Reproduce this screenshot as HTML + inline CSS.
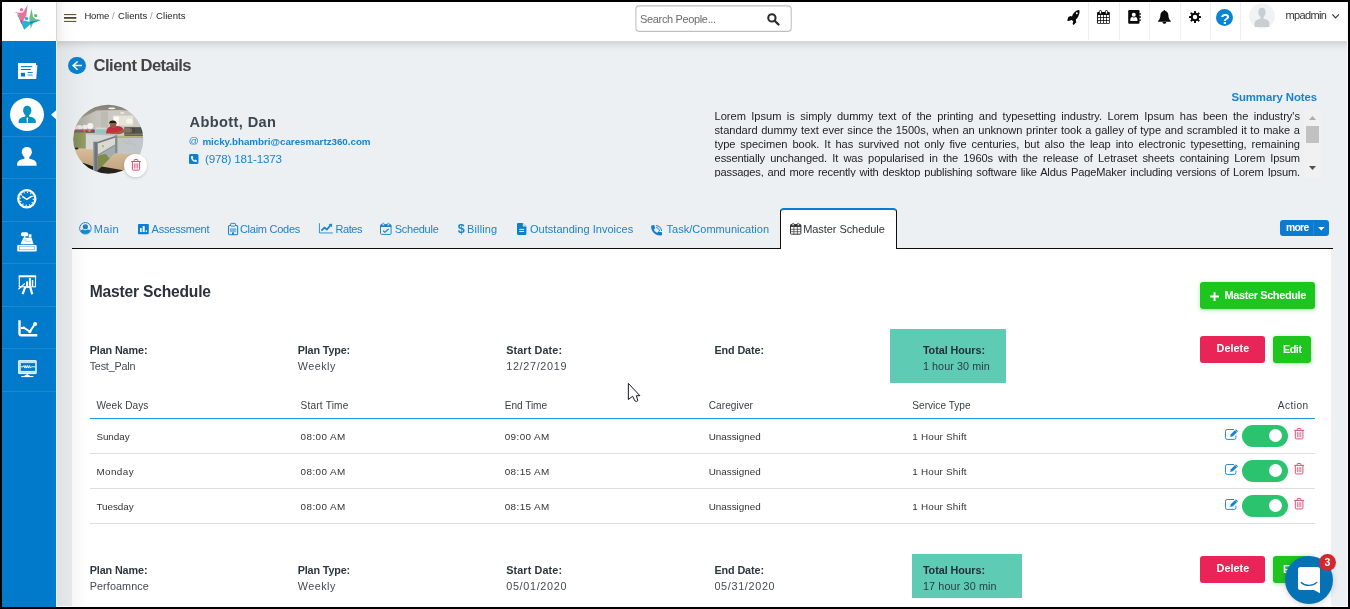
<!DOCTYPE html>
<html lang="en"><head><meta charset="utf-8"><title>Client Details</title>
<style>
html,body{margin:0;padding:0;background:#000;}
body{width:1350px;height:609px;overflow:hidden;font-family:"Liberation Sans",sans-serif;}
#app{position:absolute;left:0;top:0;width:1350px;height:609px;overflow:hidden;background:#000;}
#page{position:absolute;left:2px;top:2px;width:1346px;height:605px;background:#ecf0f3;overflow:hidden;}
.abs{position:absolute;}
.t{position:absolute;white-space:nowrap;line-height:16px;height:16px;}
svg{position:absolute;overflow:visible;}
#side{position:absolute;left:2px;top:41px;width:54px;height:566px;background:#027acc;}
#side .sep{position:absolute;left:0;width:54px;height:1px;background:rgba(255,255,255,.11);}
#logo{position:absolute;left:2px;top:2px;width:54px;height:39px;background:#fff;}
#head{position:absolute;left:56px;top:2px;width:1292px;height:39px;background:#fff;}
#headgrad{position:absolute;left:56px;top:2px;width:22px;height:39px;background:linear-gradient(90deg,rgba(0,0,0,.07),rgba(0,0,0,.02) 40%,rgba(0,0,0,0));}
#headline{position:absolute;left:56px;top:2px;width:1px;height:39px;background:#cfd6de;}
#headshadow{position:absolute;left:56px;top:41px;width:1292px;height:11px;background:linear-gradient(180deg,rgba(0,0,0,.09),rgba(0,0,0,.105) 12%,rgba(0,0,0,.055) 38%,rgba(0,0,0,.02) 68%,rgba(0,0,0,0));}
#leftshadow{position:absolute;left:56px;top:41px;width:38px;height:566px;background:linear-gradient(90deg,rgba(0,0,0,.062),rgba(0,0,0,.035) 35%,rgba(0,0,0,.012) 70%,rgba(0,0,0,0));}
#leftline{position:absolute;left:56px;top:41px;width:1px;height:566px;background:#efebe7;}
.hsep{position:absolute;top:2px;width:1px;height:37.5px;background:#eeeeee;}
#search{position:absolute;left:635.5px;top:5.5px;width:154px;height:24px;border:1px solid #bdbdbd;border-radius:3px;background:#fff;}
#card{position:absolute;left:72px;top:248.5px;width:1259.4px;height:358.5px;background:#fff;}
#cardgrad{position:absolute;left:72px;top:248.5px;width:16px;height:358.5px;background:linear-gradient(90deg,rgba(0,0,0,.03),rgba(0,0,0,0));}
#tabline{position:absolute;left:72px;top:247.5px;width:1261px;height:1.15px;background:#0c0c0c;}
#acttab{position:absolute;left:780px;top:208px;width:115px;height:38.7px;background:#fff;border:1px solid #111;border-top:2.2px solid #0b7ad1;border-bottom:none;border-radius:4px 4px 0 0;}
.btn{position:absolute;border-radius:3px;}
.teal{position:absolute;background:#5ecbb5;}
.rowline{position:absolute;left:89.7px;width:1225.3px;height:1px;background:#dedede;}
.toggle{position:absolute;width:46.2px;height:22px;border-radius:11px;background:#2bc36e;}
.toggle i{position:absolute;left:26.8px;top:4.2px;width:13.2px;height:13.2px;border-radius:50%;background:#fff;}
.nl{position:absolute;left:0;width:100%;height:16px;line-height:16px;white-space:nowrap;text-align:justify;text-align-last:justify;color:#1d1d1d;}
#txt{position:absolute;left:0;top:0;width:1350px;height:609px;will-change:transform;}
#txt2{position:absolute;left:0;top:0;width:1350px;height:609px;will-change:transform;z-index:8;}

</style></head>
<body>
<div id="app">
<div id="page"></div>
<div id="head"></div>
<div id="headgrad"></div>
<div id="headshadow"></div>
<div id="leftshadow"></div>
<div id="leftline"></div>
<div id="headline"></div>
<div id="logo"></div>
<div id="side">
  <div class="sep" style="top:51.93px"></div>
  <div class="sep" style="top:94.51px"></div>
  <div class="sep" style="top:137.09px"></div>
  <div class="sep" style="top:179.67px"></div>
  <div class="sep" style="top:222.25px"></div>
  <div class="sep" style="top:264.83px"></div>
  <div class="sep" style="top:307.41px"></div>
  <div class="sep" style="top:349.99px"></div>
</div>
<!-- active sidebar circle and pointer -->
<div class="abs" style="left:10px;top:98px;width:34px;height:33px;border-radius:50%;background:#fff"></div>
<svg style="left:50.6px;top:109.8px" width="5.4" height="9.4" viewBox="0 0 5.4 9.4"><polygon points="5.4,0 5.4,9.4 0,4.7" fill="#fafbfc"/></svg>

<!-- header widgets -->
<svg style="left:64.4px;top:14px" width="12.3" height="8" viewBox="0 0 12.3 8"><g fill="#4d4a22"><rect x="0" y="0.1" width="12.3" height="1"/><rect x="0" y="3" width="12.3" height="1.8"/><rect x="0" y="6.9" width="12.3" height="1"/></g></svg>
<svg style="left:0;top:0" width="800" height="40" viewBox="0 0 800 40"><rect x="635.9" y="5.85" width="155.3" height="25.5" rx="3" fill="#fff" stroke="#bfbfbf" stroke-width="1.05"/></svg>
<div class="hsep" style="left:1088px"></div>
<div class="hsep" style="left:1118.5px"></div>
<div class="hsep" style="left:1149px"></div>
<div class="hsep" style="left:1180px"></div>
<div class="hsep" style="left:1210px"></div>
<div class="hsep" style="left:1239.5px"></div>

<!-- tabs -->
<div id="tabline"></div>
<div id="acttab"></div>
<div id="card"></div>
<div id="cardgrad"></div>

<!-- more button -->
<div class="btn" style="left:1280px;top:219.7px;width:49px;height:16.4px;background:#0b7ad1"></div>
<div class="abs" style="left:1312.6px;top:221.5px;width:1px;height:13px;background:rgba(255,255,255,.12)"></div>
<svg style="left:1318px;top:227.2px" width="6.6" height="3.4" viewBox="0 0 6.6 3.4"><polygon points="0,0 6.6,0 3.3,3.4" fill="#fff"/></svg>

<!-- add master schedule button -->
<div class="btn" style="left:1200.2px;top:281.8px;width:115px;height:27.2px;background:#1ec51f;box-shadow:0 1px 5px rgba(30,190,60,.32)"></div>
<svg style="left:1210px;top:291.6px" width="9" height="9" viewBox="0 0 9 9"><path d="M4.55 0.2V8.9M0.2 4.55H8.9" stroke="#fff" stroke-width="1.95" fill="none"/></svg>

<!-- plan 1 -->
<div class="teal" style="left:890.2px;top:328.7px;width:115.5px;height:53.9px"></div>
<div class="btn" style="left:1200.3px;top:336px;width:64.7px;height:26.7px;background:#e92558"></div>
<div class="btn" style="left:1272.9px;top:336px;width:38px;height:26.7px;background:#1ec51f;box-shadow:0 1px 5px rgba(30,190,60,.35)"></div>
<div class="abs" style="left:90px;top:417.7px;width:1225px;height:1.4px;background:#1f9ce6"></div>
<div class="rowline" style="top:453px"></div>
<div class="rowline" style="top:488px"></div>
<div class="rowline" style="top:523px"></div>
<div class="toggle" style="left:1241.85px;top:424.8px"><i></i></div>
<div class="toggle" style="left:1241.85px;top:459.8px"><i></i></div>
<div class="toggle" style="left:1241.85px;top:494.8px"><i></i></div>

<!-- plan 2 -->
<div class="teal" style="left:911.8px;top:554.2px;width:109.8px;height:43.8px"></div>
<div class="btn" style="left:1200.3px;top:556px;width:64.7px;height:26.7px;background:#e92558"></div>
<div class="btn" style="left:1272.9px;top:556px;width:38px;height:26.7px;background:#1ec51f;box-shadow:0 1px 5px rgba(30,190,60,.35)"></div>

<!-- bottom / right thin white lines -->
<div class="abs" style="left:56px;top:606px;width:1292px;height:1px;background:#fafafa"></div>
<div class="abs" style="left:1347px;top:2px;width:1px;height:605px;background:#f6f7f9"></div>

<!-- ===== logo ===== -->
<svg style="left:0;top:0" width="60" height="41" viewBox="0 0 60 41">
  <path d="M16.9 14 L18.6 15 L21.8 21.2 L24.6 20.6 L29 21.8 L41 19.9 L30.5 24.2 L24.2 29.7 L21 22.8 Z" fill="#2cb0d8"/>
  <circle cx="26.5" cy="18.5" r="1.65" fill="#2cb0d8"/>
  <path d="M31.5 8.8 L33 16.8 L36 19.3 L41 20 L33.4 22.2 L30.7 28.8 L29.3 18 Z" fill="#5bb980" fill-opacity=".92"/>
  <circle cx="35.7" cy="15.7" r="1.6" fill="#5bb980"/>
  <path d="M29.4 21.7 L41 19.9 L33.4 22.3 L30.4 24.2 L29.7 21.9Z" fill="#0b8fc0"/>
  <path d="M14.4 11.9 L19.6 12.8 L23 12.5 L27.6 5.1 L26.3 15.5 L21.4 24.1 L18.5 14.4 L17.6 13.4 Z" fill="#e8729b"/>
  <circle cx="21.45" cy="9.8" r="1.7" fill="#e8729b"/>
  <path d="M20.3 21.2 L22.6 19.5 L21.5 24.1Z" fill="#c2457e"/>
</svg>

<!-- ===== sidebar icons ===== -->
<!-- newspaper -->
<svg style="left:18px;top:63px" width="20" height="16" viewBox="0 0 20 16">
  <path d="M0 0.1H18V2L19.4 2.2L18.2 16H0Z" fill="#fff"/>
  <g fill="#027acc"><rect x="2.9" y="3.1" width="11.3" height="1.05"/><rect x="2.9" y="6" width="10" height="1.05"/><rect x="2.9" y="9.8" width="4.2" height="3.7"/><rect x="9.6" y="9.1" width="5.1" height="0.95"/><rect x="9.6" y="11.2" width="5.1" height="2" fill-opacity=".45"/></g>
</svg>
<!-- user-tie (active) -->
<svg style="left:18px;top:105px" width="18" height="19" viewBox="0 0 18 19">
  <path d="M9.2 0.8c2.6 0 4.1 1.6 4 4.3 0.5 0.3 0.4 1.5-0.2 1.8-0.3 1.6-1.1 2.7-1.9 3.3v1.3c2.8 0.5 6.3 1.6 6.7 4.4v2.1H0.7v-2.1c0.4-2.8 3.9-3.9 6.7-4.4v-1.3c-0.8-0.6-1.6-1.7-1.9-3.3-0.6-0.3-0.7-1.5-0.2-1.8-0.1-2.7 1.3-4.3 3.9-4.3z" fill="#0692bd"/>
  <path d="M9.3 12l0.75 1.6-0.35 4.2-0.4 1-0.4-1-0.35-4.2z" fill="#fff"/>
</svg>
<!-- user -->
<svg style="left:17px;top:146px" width="20" height="20" viewBox="0 0 20 20">
  <path d="M10 0.9c2.9 0 4.8 1.5 4.7 4.6 0.6 0.4 0.4 1.9-0.3 2.2-0.4 1.7-1.2 2.7-2.1 3.4v1.6c3 0.6 6.7 1.5 7.2 4.6v2.5H0.2v-2.5c0.5-3.1 4.2-4 7.2-4.6v-1.6c-0.9-0.7-1.7-1.7-2.1-3.4-0.7-0.3-0.9-1.8-0.3-2.2-0.1-3.1 2.1-4.6 5-4.6z" fill="#fff"/>
</svg>
<!-- clock -->
<svg style="left:16.8px;top:189.4px" width="19.6" height="19.6" viewBox="0 0 19.6 19.6">
  <circle cx="9.8" cy="9.8" r="8.6" fill="none" stroke="#fff" stroke-width="2.3"/>
  <circle cx="9.8" cy="9.8" r="6.6" fill="none" stroke="#fff" stroke-width="1.4" stroke-dasharray="1.1 2.355"/>
  <path d="M5.2 7.4L9.8 10.4L14.8 7.2" fill="none" stroke="#fff" stroke-width="1.5"/>
</svg>
<!-- cash register -->
<svg style="left:17px;top:231.6px" width="20" height="20" viewBox="0 0 20 20">
  <rect x="4" y="0.3" width="7.2" height="4" rx="1.6" fill="#fff"/>
  <rect x="11.7" y="2.3" width="2.8" height="3.2" rx=".4" fill="#fff"/>
  <rect x="7.2" y="4" width="1.2" height="2" fill="#fff"/>
  <path d="M6.3 5.7H14.5L16.6 12.3H3.4Z" fill="#fff"/>
  <rect x="6.6" y="7.6" width="3" height=".8" fill="#027acc" fill-opacity=".55"/><rect x="8.6" y="9.3" width="5" height=".8" fill="#027acc" fill-opacity=".4"/>
  <rect x="0.2" y="12.9" width="19.5" height="6.5" rx="1.2" fill="#fff"/>
  <rect x="2.6" y="14.7" width="14.8" height="3" fill="none" stroke="#027acc" stroke-opacity=".55" stroke-width=".7"/>
</svg>
<!-- presentation -->
<svg style="left:18px;top:274.6px" width="19" height="20" viewBox="0 0 19 20">
  <rect x="1.3" y="1.2" width="16.2" height="10.6" fill="none" stroke="#fff" stroke-width="1.1"/>
  <rect x="0.7" y="0.4" width="17.4" height="1.9" fill="#fff"/>
  <rect x="8" y="6.4" width="2.1" height="5" fill="#fff"/><rect x="10.9" y="3.2" width="2.1" height="8.2" fill="#fff"/><rect x="13.8" y="5.1" width="1.5" height="6.3" fill="#fff"/>
  <path d="M7.3 11.9L4.6 19.2M12.2 11.9L14.2 19.2" stroke="#fff" stroke-width="2.2" fill="none"/>
  <rect x="6.8" y="11.5" width="6" height="1.3" fill="#fff"/>
  <path d="M0.4 14.3L6.8 8.5" stroke="#fff" stroke-width="1.2" fill="none"/>
</svg>
<!-- line chart -->
<svg style="left:17.6px;top:320px" width="20" height="17" viewBox="0 0 20 17">
  <path d="M1.5 0.2V13.6Q1.5 15.2 3.2 15.2H19.3" fill="none" stroke="#fff" stroke-width="2.4"/>
  <path d="M3 8L5.9 7.8L11.8 11.6L17.1 3.9" fill="none" stroke="#fff" stroke-width="1.9"/>
  <circle cx="5.9" cy="7.8" r="1.3" fill="#fff"/><circle cx="11.8" cy="11.6" r="1.7" fill="#fff"/><circle cx="17.1" cy="3.9" r="2" fill="#fff"/>
</svg>
<!-- monitor -->
<svg style="left:17.8px;top:360px" width="19" height="18" viewBox="0 0 19 18">
  <rect x="0.2" y="0.2" width="18.4" height="13.8" rx=".8" fill="#c4e0f5"/>
  <rect x="0.6" y="0.6" width="17.6" height="13" rx=".5" fill="none" stroke="#fff" stroke-width=".7"/>
  <rect x="2.9" y="3.1" width="14.2" height="7.8" fill="#027acc"/>
  <path d="M2.9 6.8H5.2L6 5.5L6.9 8.1L7.8 5.5L8.7 8.1L9.6 5.5L10.5 8.1L11.4 5.5L12.3 8.1L13.1 6.8H17.1" fill="none" stroke="#fff" stroke-width=".9"/>
  <rect x="0.6" y="11.6" width="17.6" height=".5" fill="#fff" fill-opacity=".7"/>
  <path d="M9.2 14L12.8 16.2H5.6Z" fill="#fff"/>
  <rect x="3.2" y="16" width="12.2" height="1.1" fill="#fff"/>
</svg>

<!-- ===== header icons ===== -->
<!-- search -->
<svg style="left:766.6px;top:12.5px" width="13" height="13" viewBox="0 0 13 13">
  <circle cx="4.9" cy="4.9" r="3.65" fill="none" stroke="#2b2b2b" stroke-width="2.05"/>
  <path d="M7.7 7.7L11.5 11.5" stroke="#2b2b2b" stroke-width="2.3" stroke-linecap="round"/>
</svg>
<!-- rocket -->
<svg style="left:1066.7px;top:9.9px" width="13" height="15.2" viewBox="0 0 13 15.2">
  <path d="M12.2 0.1C12.7 1.3 12.6 2.6 12.3 3.6C11.9 5 11.5 6 11 7C10.3 8.2 9.6 8.9 8.8 9.5L9.3 12.3L6.7 14.9L5.6 14.1L6.2 11.2L4.7 10.1L1.4 10.9L0.2 10.8L1.3 7L3.6 6.1L5 6.4C5.4 5.2 6 4 6.8 3C7.4 2.2 8.1 1.5 8.9 1C10 0.4 11.1 0.1 12.2 0.1Z" fill="#0b0b0b"/>
  <circle cx="9.8" cy="3.3" r="0.95" fill="#fff"/>
</svg>
<!-- calendar -->
<svg style="left:1097px;top:10px" width="13" height="14" viewBox="0 0 13 14">
  <rect x="0.1" y="2" width="12.7" height="11.8" rx=".8" fill="#0b0b0b"/>
  <rect x="2.3" y="0.45" width="2.3" height="3.6" rx="1.15" fill="#fff" stroke="#0b0b0b" stroke-width=".95"/>
  <rect x="8.3" y="0.45" width="2.3" height="3.6" rx="1.15" fill="#fff" stroke="#0b0b0b" stroke-width=".95"/>
  <g fill="#fff">
    <rect x="1" y="5.1" width="2.2" height="2.05" rx=".3"/><rect x="3.95" y="5.1" width="2.2" height="2.05" rx=".3"/><rect x="6.9" y="5.1" width="2.2" height="2.05" rx=".3"/><rect x="9.85" y="5.1" width="2.2" height="2.05" rx=".3"/>
    <rect x="1" y="8.1" width="2.2" height="2.05" rx=".3"/><rect x="3.95" y="8.1" width="2.2" height="2.05" rx=".3"/><rect x="6.9" y="8.1" width="2.2" height="2.05" rx=".3"/><rect x="9.85" y="8.1" width="2.2" height="2.05" rx=".3"/>
    <rect x="1" y="11.1" width="2.2" height="1.9" rx=".3"/><rect x="3.95" y="11.1" width="2.2" height="1.9" rx=".3"/><rect x="6.9" y="11.1" width="2.2" height="1.9" rx=".3"/><rect x="9.85" y="11.1" width="2.2" height="1.9" rx=".3"/>
  </g>
</svg>
<!-- address book -->
<svg style="left:1127.6px;top:10px" width="14" height="14" viewBox="0 0 14 14">
  <rect x="0.2" y="0.1" width="11.3" height="13.7" rx="1.1" fill="#0b0b0b"/>
  <circle cx="12" cy="3.9" r=".95" fill="#0b0b0b"/><circle cx="12" cy="7" r=".95" fill="#0b0b0b"/><circle cx="12" cy="10.1" r=".95" fill="#0b0b0b"/>
  <circle cx="5.8" cy="4.7" r="1.95" fill="#fff"/>
  <path d="M2.3 11.1V9.2Q2.3 7.1 4.4 7.1L5.8 7.7L7.2 7.1Q9.4 7.1 9.4 9.2V11.1Z" fill="#fff"/>
</svg>
<!-- bell -->
<svg style="left:1158.3px;top:10px" width="13" height="14" viewBox="0 0 13 14">
  <path d="M6.4 0C7 0 7.3 0.4 7.3 0.9C9.3 1.4 10.3 3 10.4 5.2C10.5 7.6 10.9 9.2 12.8 10.9V11.7H0V10.9C1.9 9.2 2.3 7.6 2.4 5.2C2.5 3 3.5 1.4 5.5 0.9C5.5 0.4 5.8 0 6.4 0Z" fill="#0b0b0b"/>
  <path d="M4.5 11.9H8.3C8.3 13 7.5 13.8 6.4 13.8C5.3 13.8 4.5 13 4.5 11.9Z" fill="#0b0b0b"/>
</svg>
<!-- gear -->
<svg style="left:1189.2px;top:11px" width="12" height="12" viewBox="-6 -6 12 12">
  <g fill="#0b0b0b">
    <circle r="4.35"/>
    <rect x="-1" y="-6" width="2" height="12" rx=".5"/>
    <rect x="-1" y="-6" width="2" height="12" rx=".5" transform="rotate(45)"/>
    <rect x="-1" y="-6" width="2" height="12" rx=".5" transform="rotate(90)"/>
    <rect x="-1" y="-6" width="2" height="12" rx=".5" transform="rotate(135)"/>
  </g>
  <circle r="2.25" fill="#fff"/>
</svg>
<!-- help -->
<div class="abs" style="left:1216px;top:9px;width:17.2px;height:17.2px;border-radius:50%;background:#0884d2"></div>
<!-- avatar -->
<svg style="left:1249px;top:3.4px" width="26" height="26" viewBox="0 0 26 26">
  <defs><clipPath id="avc"><circle cx="13" cy="13" r="12.8"/></clipPath></defs>
  <circle cx="13" cy="13" r="12.8" fill="#f1f2f3"/>
  <g clip-path="url(#avc)">
  <path d="M13 4.8c2.3 0 3.6 1.5 3.5 4.2 0.5 0.3 0.4 1.5-0.2 1.8-0.3 1.6-1 2.7-1.7 3.3v1.6c2.4 0.6 5.4 1.5 5.8 4.3v4H5.6v-4c0.4-2.8 3.4-3.7 5.8-4.3v-1.6c-0.7-0.6-1.4-1.7-1.7-3.3-0.6-0.3-0.7-1.5-0.2-1.8-0.1-2.7 1.2-4.2 3.5-4.2z" fill="#c9ced1"/>
  </g>
</svg>
<!-- chevron -->
<svg style="left:1332.4px;top:14.4px" width="7.2" height="4.8" viewBox="0 0 7.2 4.8"><path d="M0.3 0.4L3.6 4L6.9 0.4" fill="none" stroke="#333" stroke-width="1.1"/></svg>

<!-- back button -->
<div class="abs" style="left:68.2px;top:56.8px;width:17.6px;height:17.2px;border-radius:50%;background:#0680cf"></div>
<svg style="left:72px;top:61px" width="10.5" height="9.4" viewBox="0 0 10.5 9.4"><path d="M9.9 4.6H0.9M5.6 0.5L1 4.6L5.6 8.7" fill="none" stroke="#fff" stroke-width="1.45"/></svg>

<!-- ===== profile photo ===== -->
<svg style="left:72.6px;top:104.4px" width="70.4" height="70" viewBox="72.6 104.4 70.4 70">
  <defs>
    <clipPath id="pc"><ellipse cx="107.85" cy="139.6" rx="35.05" ry="34.55"/></clipPath>
    <filter id="bl" x="-5%" y="-5%" width="110%" height="110%"><feGaussianBlur stdDeviation="0.75"/></filter>
    <linearGradient id="wallg" x1="0" y1="0" x2="1" y2="0"><stop offset="0" stop-color="#a19d93"/><stop offset=".3" stop-color="#c3c1b8"/><stop offset=".55" stop-color="#cccbc3"/><stop offset="1" stop-color="#c4c1b6"/></linearGradient>
    <linearGradient id="ceilg" x1="0" y1="0" x2="0" y2="1"><stop offset="0" stop-color="#7d766b"/><stop offset="1" stop-color="#a5a197"/></linearGradient>
    <linearGradient id="deskl" x1="0" y1="0" x2="0" y2="1"><stop offset="0" stop-color="#d8bf9c"/><stop offset="1" stop-color="#c2a07a"/></linearGradient>
    <linearGradient id="deskr" x1="0" y1="0" x2="0" y2="1"><stop offset="0" stop-color="#d3b996"/><stop offset="1" stop-color="#bd9e7b"/></linearGradient>
    <linearGradient id="grn" x1="0" y1="0" x2="1" y2="0"><stop offset="0" stop-color="#7a8350"/><stop offset="1" stop-color="#949c68"/></linearGradient>
  </defs>
  <g clip-path="url(#pc)"><g filter="url(#bl)">
    <rect x="70" y="100" width="76" height="80" fill="url(#wallg)"/>
    <!-- ceiling -->
    <path d="M70 100H146V113L120 110.5L96 110.8L70 124Z" fill="url(#ceilg)"/>
    <ellipse cx="111.4" cy="108.7" rx="3.6" ry="0.9" fill="#fbfbf6"/><ellipse cx="121.9" cy="113.4" rx="2.3" ry=".7" fill="#f4f4ee"/>
    <!-- column -->
    <rect x="100.5" y="112" width="7" height="18" fill="#bdbbb2"/>
    <!-- window -->
    <rect x="112.7" y="116" width="20.5" height="10" fill="#e6e3d8"/>
    <rect x="113.2" y="117" width="5.4" height="9" fill="#fbfaf4"/>
    <ellipse cx="129" cy="121.5" rx="3.4" ry="2.6" fill="#f7f5ec"/>
    <rect x="133" y="117" width="12" height="10" fill="#cfccc1"/>
    <!-- dark shelf right -->
    <rect x="124" y="127.6" width="21" height="8.6" fill="#4b4a45"/>
    <rect x="124.5" y="128.2" width="5.5" height="5" fill="#77766f"/>
    <rect x="130" y="129.2" width="1.4" height="3.6" fill="#c4662f"/>
    <rect x="134.5" y="128.6" width="6.5" height="6" fill="#4d544f"/>
    <rect x="124" y="134" width="21" height="1.3" fill="#8a7f63"/>
    <!-- teal back panel -->
    <rect x="95.3" y="128" width="10.6" height="2" fill="#d9d9d4"/>
    <rect x="95.3" y="129.7" width="10.6" height="4.4" fill="#93c6c1"/>
    <!-- balloons + strip -->
    <ellipse cx="79" cy="127.6" rx="3.2" ry="2.2" fill="#e5dfdd"/><ellipse cx="84.6" cy="127.4" rx="2.6" ry="2.3" fill="#ecebea"/><ellipse cx="89.8" cy="126.3" rx="3.1" ry="3" fill="#f3f3f2"/><ellipse cx="75.8" cy="128.4" rx="2" ry="1.6" fill="#d9cfcf"/>
    <rect x="73" y="130" width="21.5" height="2.4" fill="#a8466f"/>
    <rect x="77" y="130.2" width="2" height="2" fill="#3f8a57"/><rect x="83" y="130.2" width="2" height="2" fill="#d07c3a"/><rect x="88" y="130.2" width="2" height="2" fill="#d8a23c"/><rect x="91.5" y="130" width="2" height="2.2" fill="#5b4fa0"/>
    <rect x="73" y="132.2" width="21.5" height="1" fill="#50603f"/>
    <!-- person -->
    <path d="M108.7 124.4C108.6 121.8 110.2 120.8 112.6 120.9C115 121 116.4 122.3 116.3 124.6L115.6 124.2L109.6 123.6Z" fill="#1f1a19"/>
    <path d="M109.6 123.4H115.8V126.2C115.4 127.6 114 128 112.8 128C111.2 128 109.9 127.2 109.6 126Z" fill="#8e5d4a"/>
    <path d="M105.6 133.8C106 129.4 108 126.9 111 126.6L113 128L116.4 126.4C120 126.4 122.6 127.8 123.3 130.2L121 133.9H106Z" fill="#c72f3c"/>
    <path d="M117 132.6L122.6 129.8C124 130.2 124.7 131.2 124.6 132.6L118.6 134.6L110 134.3L109.6 133.2Z" fill="#9a6149"/>
    <!-- left green partition -->
    <rect x="70" y="132.9" width="15.6" height="15.8" fill="url(#grn)"/>
    <!-- cubicle white panels -->
    <path d="M85.4 133.6L116 135.2V150.5H85.4Z" fill="#d4d7d5"/>
    <path d="M85.4 133.4L116 135V136.2L85.4 134.7Z" fill="#babdbd"/>
    <path d="M117 136.8H145V154H117Z" fill="#c1c6c8"/>
    <path d="M117 136.6H145V138.4H117Z" fill="#b3b067"/>
    <path d="M122 141L130 145M127 140L136 147" stroke="#aeb3b6" stroke-width=".5" fill="none"/>
    <!-- glass divider -->
    <path d="M97.3 142.6L115.3 136.7V145.2L97.3 155.7Z" fill="#d9dad4"/>
    <path d="M97.3 155.7L115.3 145.2V153.7L109.4 159L105.5 154.4L97.3 157Z" fill="#a6abad"/>
    <path d="M97.3 142.2L115.3 136.2V137.8L97.3 144Z" fill="#777c80"/>
    <path d="M97.3 154.9L115.3 144.5V145.6L97.3 156.2Z" fill="#8c9194"/>
    <ellipse cx="102.6" cy="146.6" rx="1" ry="1.1" fill="#c9a95e"/>
    <rect x="114.7" y="135.6" width="2.3" height="18.2" fill="#858a8d"/>
    <!-- desks -->
    <path d="M70 148.4L93 149.8V166L70 168Z" fill="url(#deskl)"/>
    <path d="M109.4 158.8L116 153.9L146 155.5V176H100L101.5 167Z" fill="url(#deskr)"/>
    <!-- lower green panel -->
    <path d="M97.3 156.6C100.5 155 103.6 154 105.5 154.4L109.4 158.8L101.5 167L97.3 170.4Z" fill="#7f8b4b"/>
    <!-- dark floor -->
    <path d="M70 158L80.5 162.3L93 167V180H70Z" fill="#1f1b18"/>
    <path d="M97.3 170.4L101.5 167L124 170.8L146 168V180H92V171Z" fill="#28221e"/>
    <!-- post -->
    <rect x="92.7" y="142.2" width="4.6" height="30" fill="#70757a"/>
    <rect x="92.7" y="142.2" width="1.2" height="30" fill="#9ea3a6"/>
    <ellipse cx="76.2" cy="148.9" rx="1.9" ry="0.9" fill="#262626"/>
  </g></g>
</svg>
<!-- trash badge -->
<div class="abs" style="left:124.3px;top:154.2px;width:22.8px;height:22.8px;border-radius:50%;background:#fff;box-shadow:0 1px 3px rgba(0,0,0,.18)"></div>
<svg style="left:131.2px;top:158.7px" width="10" height="11.6" viewBox="0 0 10 11.6">
  <g fill="none" stroke="#e0416d" stroke-width=".95">
    <path d="M0.2 2.5H9.8"/><path d="M3.2 2.3V1.2Q3.2 0.5 3.9 0.5H6.1Q6.8 0.5 6.8 1.2V2.3"/>
    <path d="M1.4 2.7V10Q1.4 11.1 2.5 11.1H7.5Q8.6 11.1 8.6 10V2.7"/>
    <path d="M3.4 4.3V9.5M5 4.3V9.5M6.6 4.3V9.5" stroke-width=".75"/>
  </g>
</svg>
<!-- phone square -->
<svg style="left:189px;top:154px" width="9.6" height="10" viewBox="0 0 9.6 10">
  <rect x="0" y="0" width="9.5" height="10" rx="1.5" fill="#0c7fd0"/>
  <path d="M2.5 2.2L3.6 1.9L4.3 3.6L3.6 4.2C4 5.2 4.7 5.9 5.7 6.4L6.4 5.6L8 6.4L7.7 7.6C7.5 8 7.2 8.1 6.8 8.1C4.1 7.8 2.1 5.8 1.9 3.1C1.9 2.7 2.1 2.4 2.5 2.2Z" fill="#fff"/>
</svg>

<!-- ===== notes scrollbar ===== -->
<div class="abs" style="left:1304.3px;top:109px;width:16.4px;height:68px;background:#f1f1f1"></div>
<div class="abs" style="left:1306.2px;top:126px;width:12.6px;height:16.8px;background:#c1c1c1"></div>
<svg style="left:1309px;top:115.8px" width="7" height="4" viewBox="0 0 7 4"><polygon points="0,4 7,4 3.5,0" fill="#adadad"/></svg>
<svg style="left:1309px;top:166px" width="7" height="4" viewBox="0 0 7 4"><polygon points="0,0 7,0 3.5,4" fill="#505050"/></svg>

<!-- ===== tab icons ===== -->
<!-- user-circle -->
<svg style="left:79px;top:222.2px" width="12.8" height="12.6" viewBox="0 0 12.8 12.6">
  <defs><clipPath id="uc"><circle cx="6.4" cy="6.3" r="5.5"/></clipPath></defs>
  <circle cx="6.4" cy="6.3" r="5.75" fill="none" stroke="#1883cf" stroke-width="1"/>
  <circle cx="6.4" cy="4.75" r="2.6" fill="#1883cf"/>
  <path d="M1 12.4V10.2Q1.2 7.6 4.2 7.5L6.4 8.5L8.6 7.5Q11.6 7.6 11.8 10.2V12.4Z" fill="#1883cf" clip-path="url(#uc)"/>
</svg>
<!-- assessment -->
<svg style="left:138px;top:223.9px" width="10.8" height="10.2" viewBox="0 0 10.8 10.2">
  <rect width="10.8" height="10.2" rx=".8" fill="#0c7fd0"/>
  <rect x="2" y="4.1" width="1.7" height="4" fill="#fff"/><rect x="4.7" y="2.1" width="2" height="6" fill="#fff"/><rect x="7.7" y="6.4" width="1.4" height="1.7" fill="#fff"/>
</svg>
<!-- claim codes (clipboard) -->
<svg style="left:227.8px;top:222.8px" width="10.2" height="12.2" viewBox="0 0 10.2 12.2">
  <rect x="0.55" y="2.5" width="9.1" height="9.2" rx="1" fill="none" stroke="#1883cf" stroke-width="1.05"/>
  <rect x="2.6" y="0.4" width="4.9" height="2.7" rx=".6" fill="#ecf0f3" stroke="#1883cf" stroke-width=".9"/>
  <rect x="2" y="5.2" width="6.2" height="4" fill="#1883cf" fill-opacity=".38"/>
  <path d="M2 6.3H8.2M2 8H8.2" stroke="#1883cf" stroke-width=".55" stroke-dasharray=".9 .6"/>
  <rect x="4" y="9.4" width="2.1" height="2.4" fill="#1883cf"/>
</svg>
<!-- rates (chart-line) -->
<svg style="left:318.8px;top:223.4px" width="14.2" height="10.6" viewBox="0 0 14.2 10.6">
  <path d="M0.45 0.2V9.95H13.9" fill="none" stroke="#1883cf" stroke-width=".85"/>
  <path d="M2.4 7.7L5.5 4.6L7.9 6.5L11.4 2.4" fill="none" stroke="#1883cf" stroke-width="1.7"/>
  <path d="M9.7 1.1L13.2 0.7L12.9 4.2Z" fill="#1883cf"/>
</svg>
<!-- schedule (calendar-check) -->
<svg style="left:380.2px;top:222.9px" width="11.6" height="12" viewBox="0 0 11.6 12">
  <rect x="0.5" y="1.6" width="10.6" height="9.8" rx="1.1" fill="none" stroke="#1883cf" stroke-width=".95"/>
  <path d="M0.5 3.9V2.6Q0.5 1.6 1.6 1.6H10Q11.1 1.6 11.1 2.6V3.9Z" fill="#1883cf"/>
  <rect x="2.2" y="0.2" width="2" height="2.6" rx=".9" fill="#ecf0f3" stroke="#1883cf" stroke-width=".7"/>
  <rect x="7.4" y="0.2" width="2" height="2.6" rx=".9" fill="#ecf0f3" stroke="#1883cf" stroke-width=".7"/>
  <path d="M3.1 7.7L4.9 9.2L8.7 6" fill="none" stroke="#1883cf" stroke-width="1.2"/>
</svg>
<!-- outstanding invoices (file) -->
<svg style="left:517.3px;top:223px" width="9.5" height="11.9" viewBox="0 0 9.5 11.9">
  <path d="M1.1 0H5.8L9.4 3.6V10.8Q9.4 11.9 8.3 11.9H1.1Q0 11.9 0 10.8V1.1Q0 0 1.1 0Z" fill="#0c7fd0"/>
  <path d="M5.8 0V2.7Q5.8 3.6 6.7 3.6H9.4Z" fill="#ecf0f3" fill-opacity=".85"/>
  <rect x="2.3" y="5.9" width="4.8" height=".9" fill="#fff"/><rect x="2.3" y="8.1" width="4.8" height=".9" fill="#fff"/>
</svg>
<!-- task/communication (phone-volume) -->
<svg style="left:651.2px;top:224.5px" width="11.4" height="10.6" viewBox="0 0 11.4 10.6">
  <path d="M0.2 0.6L3.3 0.1L4.1 3.6L2.8 4.5C3.4 6 4.6 7.2 6.3 7.8L7.3 6.6L11 7.3V10.3L8.8 10.55C4.2 10.3 0.6 6.8 0.2 2.2Z" fill="#0c7fd0"/>
  <path d="M5 0.6C8 0.6 10.4 2.9 10.6 5.9" fill="none" stroke="#0c7fd0" stroke-width="1"/>
  <path d="M5.1 2.6C6.9 2.7 8.3 4.1 8.5 5.9" fill="none" stroke="#0c7fd0" stroke-width="1"/>
</svg>
<!-- master schedule (calendar dark) -->
<svg style="left:789.5px;top:223.2px" width="11.4" height="11.8" viewBox="0 0 11.4 11.8">
  <rect x="0.5" y="1.6" width="10.4" height="9.6" rx=".9" fill="none" stroke="#2a2a2a" stroke-width=".95"/>
  <rect x="0.5" y="1.6" width="10.4" height="2.3" fill="#2a2a2a"/>
  <rect x="2.1" y="0.3" width="2" height="2.5" rx=".9" fill="#fff" stroke="#2a2a2a" stroke-width=".7"/>
  <rect x="7.3" y="0.3" width="2" height="2.5" rx=".9" fill="#fff" stroke="#2a2a2a" stroke-width=".7"/>
  <path d="M0.5 6.3H10.9M0.5 8.7H10.9M3.9 3.9V11.2M7.4 3.9V11.2" stroke="#2a2a2a" stroke-width=".65"/>
</svg>

<!-- ===== row action icons ===== -->

<svg style="left:1224.6px;top:428.5px" width="13.4" height="11" viewBox="0 0 13.4 11"><path d="M9 0.5H2.2Q0.5 0.5 0.5 2.2V8.7Q0.5 10.4 2.2 10.4H9.2Q10.9 10.4 10.9 8.7V6.6" fill="none" stroke="#1883cf" stroke-width=".95"/>
    <path d="M5.2 7.9L5.8 5.2L10.9 0.2L13 2.2L7.9 7.3Z" fill="#1883cf"/>
    <path d="M10.1 1.2L12 3" stroke="#fff" stroke-width=".5"/></svg>
<svg style="left:1224.6px;top:463.5px" width="13.4" height="11" viewBox="0 0 13.4 11"><path d="M9 0.5H2.2Q0.5 0.5 0.5 2.2V8.7Q0.5 10.4 2.2 10.4H9.2Q10.9 10.4 10.9 8.7V6.6" fill="none" stroke="#1883cf" stroke-width=".95"/>
    <path d="M5.2 7.9L5.8 5.2L10.9 0.2L13 2.2L7.9 7.3Z" fill="#1883cf"/>
    <path d="M10.1 1.2L12 3" stroke="#fff" stroke-width=".5"/></svg>
<svg style="left:1224.6px;top:498.5px" width="13.4" height="11" viewBox="0 0 13.4 11"><path d="M9 0.5H2.2Q0.5 0.5 0.5 2.2V8.7Q0.5 10.4 2.2 10.4H9.2Q10.9 10.4 10.9 8.7V6.6" fill="none" stroke="#1883cf" stroke-width=".95"/>
    <path d="M5.2 7.9L5.8 5.2L10.9 0.2L13 2.2L7.9 7.3Z" fill="#1883cf"/>
    <path d="M10.1 1.2L12 3" stroke="#fff" stroke-width=".5"/></svg>
<svg style="left:1294.3px;top:427.8px" width="10.4" height="11.4" viewBox="0 0 10.4 11.4"><g fill="none" stroke="#de4f77" stroke-width="1"><path d="M0.2 2.4H10"/><path d="M3.3 2.2V1.1Q3.3 0.45 4 0.45H6.2Q6.9 0.45 6.9 1.1V2.2"/>
    <path d="M1.3 2.6V9.9Q1.3 10.9 2.4 10.9H7.8Q8.9 10.9 8.9 9.9V2.6"/>
    <path d="M3.4 4.1V9.2M5.1 4.1V9.2M6.8 4.1V9.2" stroke-width=".8"/></g></svg>
<svg style="left:1294.3px;top:462.8px" width="10.4" height="11.4" viewBox="0 0 10.4 11.4"><g fill="none" stroke="#de4f77" stroke-width="1"><path d="M0.2 2.4H10"/><path d="M3.3 2.2V1.1Q3.3 0.45 4 0.45H6.2Q6.9 0.45 6.9 1.1V2.2"/>
    <path d="M1.3 2.6V9.9Q1.3 10.9 2.4 10.9H7.8Q8.9 10.9 8.9 9.9V2.6"/>
    <path d="M3.4 4.1V9.2M5.1 4.1V9.2M6.8 4.1V9.2" stroke-width=".8"/></g></svg>
<svg style="left:1294.3px;top:497.8px" width="10.4" height="11.4" viewBox="0 0 10.4 11.4"><g fill="none" stroke="#de4f77" stroke-width="1"><path d="M0.2 2.4H10"/><path d="M3.3 2.2V1.1Q3.3 0.45 4 0.45H6.2Q6.9 0.45 6.9 1.1V2.2"/>
    <path d="M1.3 2.6V9.9Q1.3 10.9 2.4 10.9H7.8Q8.9 10.9 8.9 9.9V2.6"/>
    <path d="M3.4 4.1V9.2M5.1 4.1V9.2M6.8 4.1V9.2" stroke-width=".8"/></g></svg>

<!-- ===== mouse cursor ===== -->
<svg style="left:626px;top:381px" width="16" height="23" viewBox="626 381 16 23">
  <path d="M628.35 383.4V399.5L632.6 396.3L634.9 400.9Q636.4 402.1 637.8 400.7L636.4 395.7H639.9Z" fill="#fff" stroke="#15151f" stroke-width="1" stroke-linejoin="miter"/>
</svg>

<!-- ===== chat widget ===== -->
<div class="abs" style="z-index:5;left:1285.2px;top:556px;width:47.8px;height:47.8px;border-radius:50%;background:#0672b6;box-shadow:0 1px 6px rgba(0,0,0,.18)"></div>
<svg style="z-index:6;left:1298px;top:566.8px" width="22.4" height="26.6" viewBox="0 0 22.4 26.6">
  <path d="M2.6 0H19.4Q22 0 22 2.6V26.2L16 23H2.6Q0 23 0 20.4V2.6Q0 0 2.6 0Z" fill="#fff"/>
  <path d="M3.2 15.4C7.6 19.4 14.6 19.4 18.8 15.4" fill="none" stroke="#0672b6" stroke-width="1.3" stroke-linecap="round"/>
</svg>
<div class="abs" style="z-index:6;left:1319.2px;top:553.8px;width:17.2px;height:17.6px;border-radius:50%;background:#d0292f"></div>

<div id="txt">
<!-- notes -->
<div id="notes" style="position:absolute;left:714.6px;top:109px;width:585.3px;height:68px;overflow:hidden;">
<div class="nl" style="top:-0.75px;font-size:11.10px;letter-spacing:-0.041px;">Lorem Ipsum is simply dummy text of the printing and typesetting industry. Lorem Ipsum has been the industry&#x27;s</div>
<div class="nl" style="top:13.10px;font-size:11.10px;letter-spacing:-0.028px;">standard dummy text ever since the 1500s, when an unknown printer took a galley of type and scrambled it to make a</div>
<div class="nl" style="top:26.95px;font-size:11.10px;letter-spacing:-0.046px;">type specimen book. It has survived not only five centuries, but also the leap into electronic typesetting, remaining</div>
<div class="nl" style="top:40.80px;font-size:11.10px;letter-spacing:-0.128px;">essentially unchanged. It was popularised in the 1960s with the release of Letraset sheets containing Lorem Ipsum</div>
<div class="nl" style="top:54.65px;font-size:11.10px;letter-spacing:-0.176px;">passages, and more recently with desktop publishing software like Aldus PageMaker including versions of Lorem Ipsum.</div>
</div>
<!-- text -->
<span id="t0" class="t" style="left:84.40px;top:8.00px;font-size:9.50px;font-weight:400;color:#222;letter-spacing:-0.148px;">Home</span>
<span id="t1" class="t" style="left:111.90px;top:8.00px;font-size:9.50px;font-weight:400;color:#9a9a9a;letter-spacing:0.042px;">/</span>
<span id="t2" class="t" style="left:118.10px;top:8.00px;font-size:9.50px;font-weight:400;color:#222;letter-spacing:0.009px;">Clients</span>
<span id="t3" class="t" style="left:150.00px;top:8.00px;font-size:9.50px;font-weight:400;color:#9a9a9a;letter-spacing:0.042px;">/</span>
<span id="t4" class="t" style="left:156.10px;top:8.00px;font-size:9.50px;font-weight:400;color:#222;letter-spacing:0.042px;">Clients</span>
<span id="t5" class="t" style="left:188.70px;top:133.00px;font-size:9.80px;font-weight:400;color:#1883cf;letter-spacing:-0.300px;">@</span>
<span id="t6" class="t" style="left:640.10px;top:11.00px;font-size:11.00px;font-weight:400;color:#6b6b6b;letter-spacing:-0.356px;">Search People...</span>
<span id="t7" class="t" style="left:1285.40px;top:7.00px;font-size:11.00px;font-weight:400;color:#333;letter-spacing:-0.608px;">mpadmin</span>
<span id="t8" class="t" style="left:93.60px;top:58.00px;font-size:16.60px;font-weight:700;color:#444;letter-spacing:-0.548px;">Client Details</span>
<span id="t9" class="t" style="left:189.60px;top:114.00px;font-size:14.60px;font-weight:700;color:#3d4750;letter-spacing:0.371px;">Abbott, Dan</span>
<span id="t10" class="t" style="left:202.40px;top:134.00px;font-size:9.80px;font-weight:700;color:#1883cf;letter-spacing:-0.025px;">micky.bhambri@caresmartz360.com</span>
<span id="t11" class="t" style="left:205.00px;top:151.00px;font-size:11.60px;font-weight:400;color:#1883cf;letter-spacing:-0.177px;">(978) 181-1373</span>
<span id="t12" class="t" style="left:1231.50px;top:89.00px;font-size:11.40px;font-weight:700;color:#1883cf;letter-spacing:-0.103px;">Summary Notes</span>
<span id="t13" class="t" style="left:93.80px;top:221.00px;font-size:11.00px;font-weight:400;color:#1883cf;letter-spacing:0.319px;">Main</span>
<span id="t14" class="t" style="left:151.60px;top:221.00px;font-size:11.00px;font-weight:400;color:#1883cf;letter-spacing:-0.214px;">Assessment</span>
<span id="t15" class="t" style="left:239.90px;top:221.00px;font-size:11.00px;font-weight:400;color:#1883cf;letter-spacing:-0.257px;">Claim Codes</span>
<span id="t16" class="t" style="left:335.60px;top:221.00px;font-size:11.00px;font-weight:400;color:#1883cf;letter-spacing:-0.463px;">Rates</span>
<span id="t17" class="t" style="left:394.70px;top:221.00px;font-size:11.00px;font-weight:400;color:#1883cf;letter-spacing:-0.254px;">Schedule</span>
<span id="t18" class="t" style="left:457.70px;top:221.00px;font-size:12.60px;font-weight:700;color:#1883cf;letter-spacing:-0.300px;">$</span>
<span id="t19" class="t" style="left:467.00px;top:221.00px;font-size:11.00px;font-weight:400;color:#1883cf;letter-spacing:0.140px;">Billing</span>
<span id="t20" class="t" style="left:530.00px;top:221.00px;font-size:11.00px;font-weight:400;color:#1883cf;letter-spacing:0.025px;">Outstanding Invoices</span>
<span id="t21" class="t" style="left:666.50px;top:221.00px;font-size:11.00px;font-weight:400;color:#1883cf;letter-spacing:0.024px;">Task/Communication</span>
<span id="t22" class="t" style="left:803.20px;top:221.00px;font-size:11.00px;font-weight:400;color:#2f343a;letter-spacing:-0.068px;">Master Schedule</span>
<span id="t23" class="t" style="left:1286.00px;top:220.00px;font-size:10.40px;font-weight:700;color:#fff;letter-spacing:-0.741px;">more</span>
<span id="t24" class="t" style="left:89.80px;top:284.00px;font-size:15.60px;font-weight:700;color:#2b323b;letter-spacing:-0.196px;">Master Schedule</span>
<span id="t25" class="t" style="left:1224.50px;top:287.00px;font-size:11.00px;font-weight:700;color:#fff;letter-spacing:-0.402px;">Master Schedule</span>
<span id="t26" class="t" style="left:89.70px;top:342.00px;font-size:10.80px;font-weight:700;color:#2f363e;letter-spacing:-0.113px;">Plan Name:</span>
<span id="t27" class="t" style="left:89.70px;top:358.00px;font-size:10.80px;font-weight:400;color:#444a52;letter-spacing:-0.215px;">Test_Paln</span>
<span id="t28" class="t" style="left:297.70px;top:342.00px;font-size:10.80px;font-weight:700;color:#2f363e;letter-spacing:-0.144px;">Plan Type:</span>
<span id="t29" class="t" style="left:297.70px;top:358.00px;font-size:10.80px;font-weight:400;color:#444a52;letter-spacing:0.479px;">Weekly</span>
<span id="t30" class="t" style="left:506.20px;top:342.00px;font-size:10.80px;font-weight:700;color:#2f363e;letter-spacing:0.119px;">Start Date:</span>
<span id="t31" class="t" style="left:506.20px;top:358.00px;font-size:10.80px;font-weight:400;color:#444a52;letter-spacing:0.684px;">12/27/2019</span>
<span id="t32" class="t" style="left:714.40px;top:342.00px;font-size:10.80px;font-weight:700;color:#2f363e;letter-spacing:-0.099px;">End Date:</span>
<span id="t33" class="t" style="left:922.90px;top:342.00px;font-size:10.80px;font-weight:700;color:#23303a;letter-spacing:-0.062px;">Total Hours:</span>
<span id="t34" class="t" style="left:922.90px;top:358.00px;font-size:10.80px;font-weight:400;color:#2c3d42;letter-spacing:0.072px;">1 hour 30 min</span>
<span id="t35" class="t" style="left:1216.60px;top:340.00px;font-size:10.80px;font-weight:700;color:#fff;letter-spacing:0.036px;">Delete</span>
<span id="t36" class="t" style="left:1283.00px;top:341.00px;font-size:10.80px;font-weight:700;color:#fff;letter-spacing:-0.469px;">Edit</span>
<span id="t37" class="t" style="left:89.70px;top:562.00px;font-size:10.80px;font-weight:700;color:#2f363e;letter-spacing:-0.113px;">Plan Name:</span>
<span id="t38" class="t" style="left:89.70px;top:578.00px;font-size:10.80px;font-weight:400;color:#444a52;letter-spacing:0.098px;">Perfoamnce</span>
<span id="t39" class="t" style="left:297.70px;top:562.00px;font-size:10.80px;font-weight:700;color:#2f363e;letter-spacing:-0.144px;">Plan Type:</span>
<span id="t40" class="t" style="left:297.70px;top:578.00px;font-size:10.80px;font-weight:400;color:#444a52;letter-spacing:0.479px;">Weekly</span>
<span id="t41" class="t" style="left:506.20px;top:562.00px;font-size:10.80px;font-weight:700;color:#2f363e;letter-spacing:0.119px;">Start Date:</span>
<span id="t42" class="t" style="left:506.20px;top:578.00px;font-size:10.80px;font-weight:400;color:#444a52;letter-spacing:0.684px;">05/01/2020</span>
<span id="t43" class="t" style="left:714.40px;top:562.00px;font-size:10.80px;font-weight:700;color:#2f363e;letter-spacing:-0.099px;">End Date:</span>
<span id="t44" class="t" style="left:714.40px;top:578.00px;font-size:10.80px;font-weight:400;color:#444a52;letter-spacing:0.684px;">05/31/2020</span>
<span id="t45" class="t" style="left:922.90px;top:562.00px;font-size:10.80px;font-weight:700;color:#23303a;letter-spacing:-0.062px;">Total Hours:</span>
<span id="t46" class="t" style="left:922.90px;top:578.00px;font-size:10.80px;font-weight:400;color:#2c3d42;letter-spacing:0.128px;">17 hour 30 min</span>
<span id="t47" class="t" style="left:1216.60px;top:560.00px;font-size:10.80px;font-weight:700;color:#fff;letter-spacing:0.036px;">Delete</span>
<span id="t48" class="t" style="left:1283.00px;top:561.00px;font-size:10.80px;font-weight:700;color:#fff;letter-spacing:-0.469px;">Edit</span>
<span id="t49" class="t" style="left:96.40px;top:398.00px;font-size:10.10px;font-weight:400;color:#3a4047;letter-spacing:0.072px;">Week Days</span>
<span id="t50" class="t" style="left:300.60px;top:398.00px;font-size:10.10px;font-weight:400;color:#3a4047;letter-spacing:0.189px;">Start Time</span>
<span id="t51" class="t" style="left:504.70px;top:398.00px;font-size:10.10px;font-weight:400;color:#3a4047;letter-spacing:-0.034px;">End Time</span>
<span id="t52" class="t" style="left:708.70px;top:398.00px;font-size:10.10px;font-weight:400;color:#3a4047;letter-spacing:0.067px;">Caregiver</span>
<span id="t53" class="t" style="left:912.30px;top:398.00px;font-size:10.10px;font-weight:400;color:#3a4047;letter-spacing:0.012px;">Service Type</span>
<span id="t54" class="t" style="left:1277.80px;top:398.00px;font-size:10.10px;font-weight:400;color:#3a4047;letter-spacing:0.467px;">Action</span>
<span id="t55" class="t" style="left:96.40px;top:429.00px;font-size:9.90px;font-weight:400;color:#333;letter-spacing:-0.060px;">Sunday</span>
<span id="t56" class="t" style="left:300.60px;top:429.00px;font-size:9.90px;font-weight:400;color:#333;letter-spacing:0.409px;">08:00 AM</span>
<span id="t57" class="t" style="left:504.70px;top:429.00px;font-size:9.90px;font-weight:400;color:#333;letter-spacing:0.409px;">09:00 AM</span>
<span id="t58" class="t" style="left:708.70px;top:429.00px;font-size:9.90px;font-weight:400;color:#333;letter-spacing:-0.017px;">Unassigned</span>
<span id="t59" class="t" style="left:912.30px;top:429.00px;font-size:9.90px;font-weight:400;color:#333;letter-spacing:0.195px;">1 Hour Shift</span>
<span id="t60" class="t" style="left:96.40px;top:464.00px;font-size:9.90px;font-weight:400;color:#333;letter-spacing:0.412px;">Monday</span>
<span id="t61" class="t" style="left:300.60px;top:464.00px;font-size:9.90px;font-weight:400;color:#333;letter-spacing:0.409px;">08:00 AM</span>
<span id="t62" class="t" style="left:504.70px;top:464.00px;font-size:9.90px;font-weight:400;color:#333;letter-spacing:0.409px;">08:15 AM</span>
<span id="t63" class="t" style="left:708.70px;top:464.00px;font-size:9.90px;font-weight:400;color:#333;letter-spacing:-0.017px;">Unassigned</span>
<span id="t64" class="t" style="left:912.30px;top:464.00px;font-size:9.90px;font-weight:400;color:#333;letter-spacing:0.195px;">1 Hour Shift</span>
<span id="t65" class="t" style="left:96.40px;top:499.00px;font-size:9.90px;font-weight:400;color:#333;letter-spacing:-0.053px;">Tuesday</span>
<span id="t66" class="t" style="left:300.60px;top:499.00px;font-size:9.90px;font-weight:400;color:#333;letter-spacing:0.409px;">08:00 AM</span>
<span id="t67" class="t" style="left:504.70px;top:499.00px;font-size:9.90px;font-weight:400;color:#333;letter-spacing:0.409px;">08:15 AM</span>
<span id="t68" class="t" style="left:708.70px;top:499.00px;font-size:9.90px;font-weight:400;color:#333;letter-spacing:-0.017px;">Unassigned</span>
<span id="t69" class="t" style="left:912.30px;top:499.00px;font-size:9.90px;font-weight:400;color:#333;letter-spacing:0.195px;">1 Hour Shift</span>
<span id="t71" class="t" style="left:1220.50px;top:11.00px;font-size:15.50px;font-weight:700;color:#fff;letter-spacing:-0.300px;">?</span>
</div>
<div id="txt2"><span id="t70" class="t" style="left:1324.40px;top:554.00px;font-size:10.50px;font-weight:700;color:#fff;letter-spacing:-0.300px;z-index:7;">3</span></div>
</div>
</body></html>
